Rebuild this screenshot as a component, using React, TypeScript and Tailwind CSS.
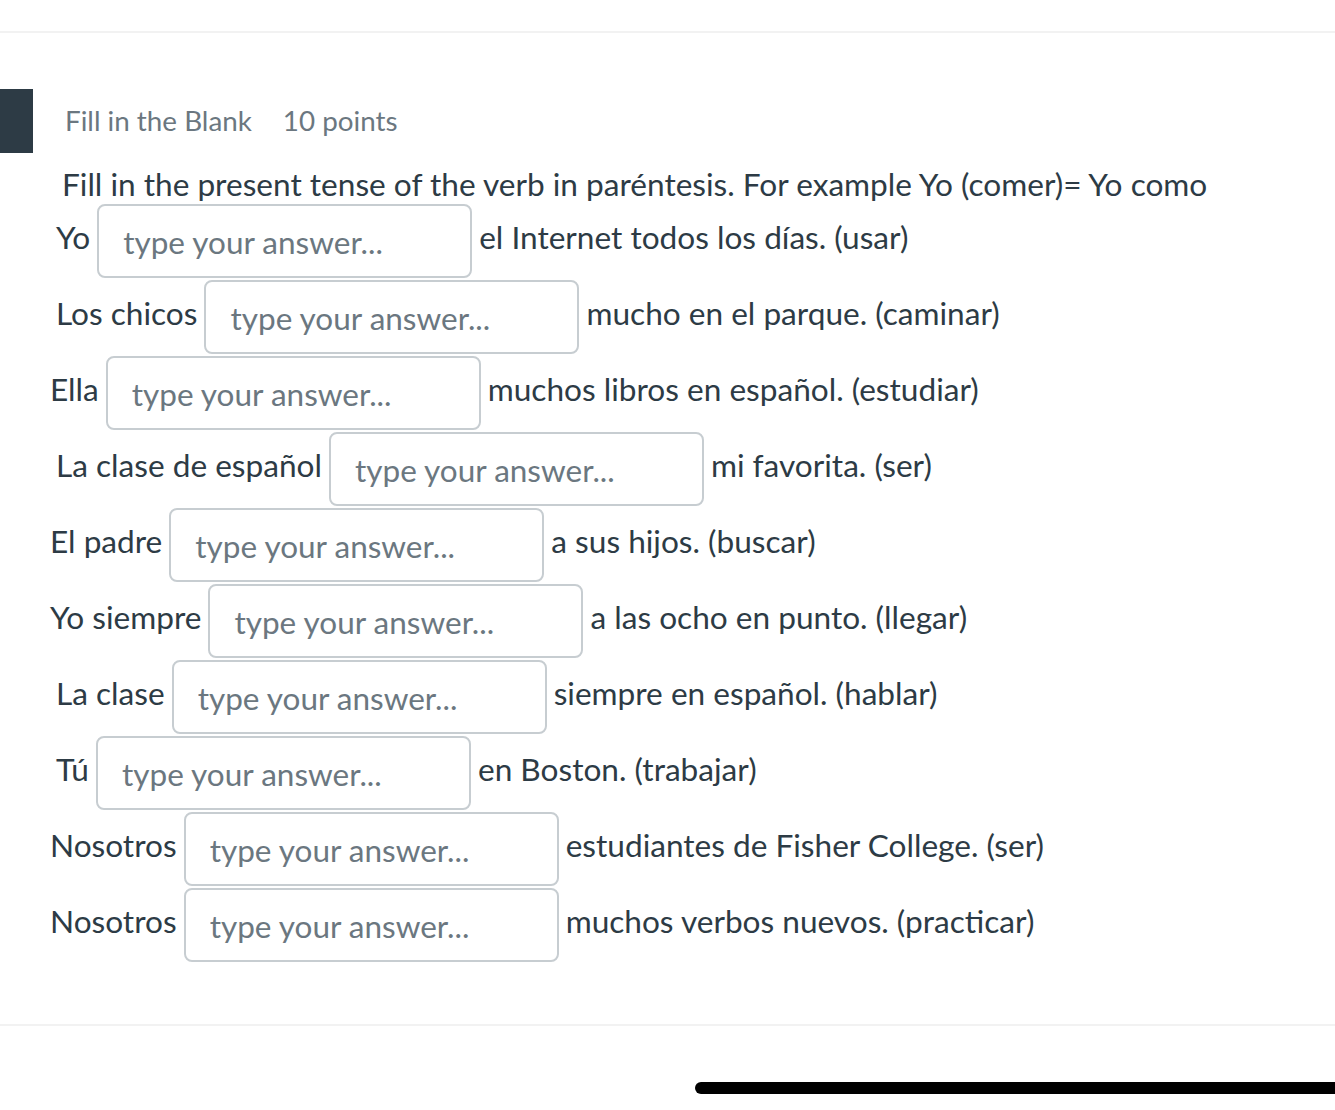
import React from "react";

type Row = { before: string; after: string; indent: string };

const rows: Row[] = [
  { before: "Yo", after: "el Internet todos los días. (usar)", indent: "pl-[56px]" },
  { before: "Los chicos", after: "mucho en el parque. (caminar)", indent: "pl-[56px]" },
  { before: "Ella", after: "muchos libros en español. (estudiar)", indent: "pl-[50px]" },
  { before: "La clase de español", after: "mi favorita. (ser)", indent: "pl-[56px]" },
  { before: "El padre", after: "a sus hijos. (buscar)", indent: "pl-[50px]" },
  { before: "Yo siempre", after: "a las ocho en punto. (llegar)", indent: "pl-[50px]" },
  { before: "La clase", after: "siempre en español. (hablar)", indent: "pl-[56px]" },
  { before: "Tú", after: "en Boston. (trabajar)", indent: "pl-[56px]" },
  { before: "Nosotros", after: "estudiantes de Fisher College. (ser)", indent: "pl-[50px]" },
  { before: "Nosotros", after: "muchos verbos nuevos. (practicar)", indent: "pl-[50px]" },
];

export default function App() {
  return (
    <div className="min-h-[1110px] bg-white font-['Lato','Liberation_Sans',sans-serif] text-[#2d3b45]">
      <div className="h-[31px]" />
      <div className="border-t-2 border-[#f2f2f2]" />

      <div className="mt-[56px] flex h-[64px] items-center">
        <div className="h-[64px] w-[33px] bg-[#2d3b45]" />
        <div className="ml-[32px] flex gap-[31px] text-[27.8px] text-[#6b7780]">
          <span>Fill in the Blank</span>
          <span>10 points</span>
        </div>
      </div>

      <p className="mt-[11px] pl-[62px] text-[31.6px] leading-[40px]">
        Fill in the present tense of the verb in paréntesis. For example Yo (comer)= Yo como
      </p>

      <div className="flex flex-col gap-[2px]">
        {rows.map((row, i) => (
          <div key={i} className={`flex items-center text-[31.6px] ${row.indent}`}>
            <span className="pb-[6px]">{row.before}</span>
            <input
              type="text"
              placeholder="type your answer..."
              className="ml-[7px] h-[74px] w-[375px] rounded-[8px] border-2 border-[#c7cdd1] bg-white px-[24px] pt-[2px] text-[31.5px] text-[#2d3b45] outline-none placeholder:text-[#6b7780]"
            />
            <span className="ml-[7px] pb-[6px]">{row.after}</span>
          </div>
        ))}
      </div>

      <div className="mt-[62px] border-t-2 border-[#f2f2f2]" />

      <div className="mt-[56px] ml-[695px] h-[12px] rounded-l-full bg-black" />
    </div>
  );
}
